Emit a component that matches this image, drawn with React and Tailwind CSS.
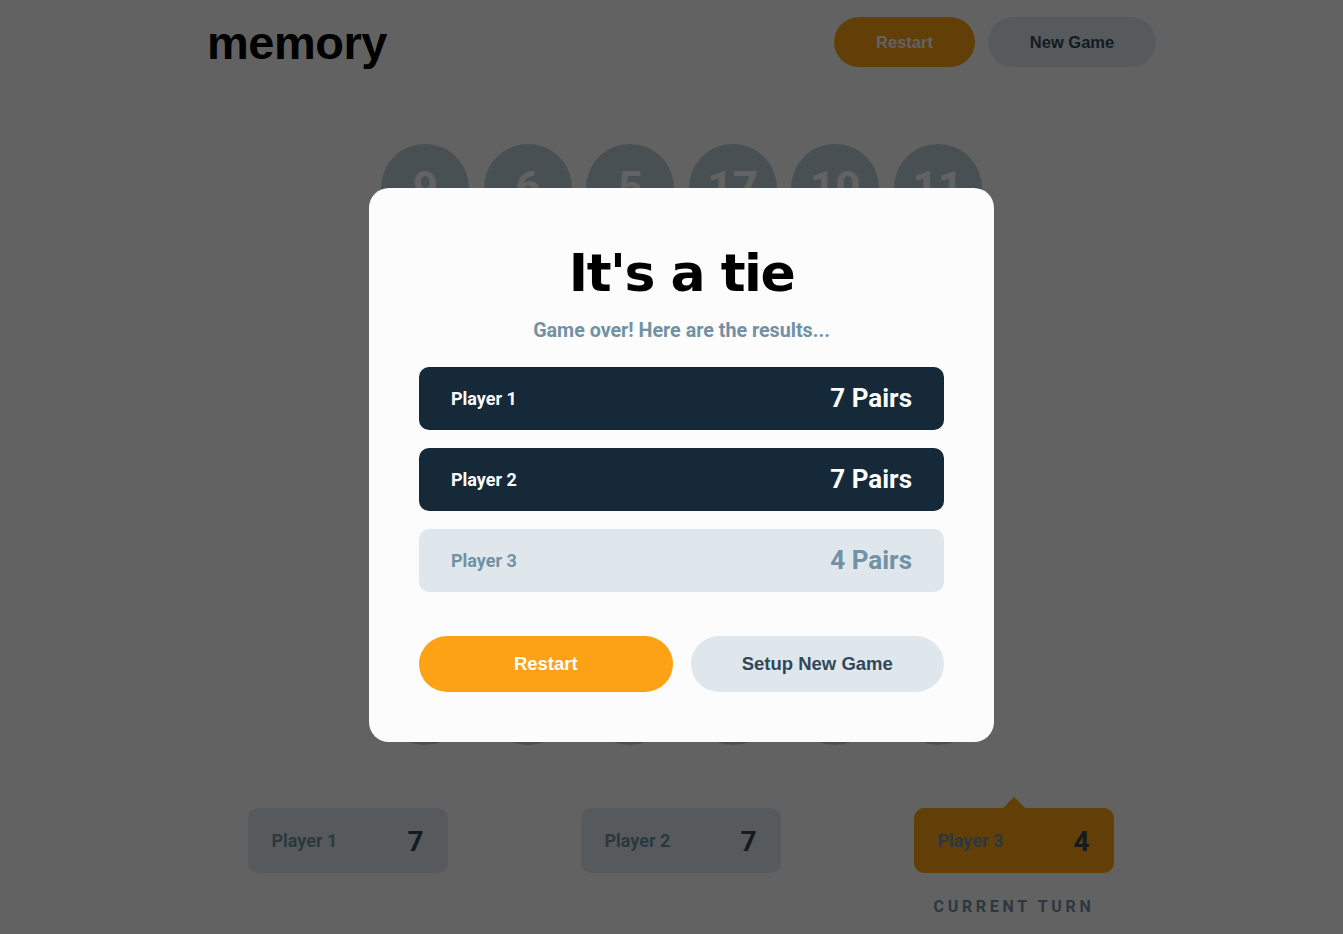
import React from 'react'

const board = [
  9, 6, 5, 17, 10, 11,
  3, 14, 0, 8, 2, 15,
  12, 1, 7, 4, 16, 13,
  5, 10, 9, 17, 6, 11,
  0, 3, 14, 8, 15, 2,
  13, 7, 1, 12, 4, 16,
];

const players = [
  { name: 'Player 1', score: 7 },
  { name: 'Player 2', score: 7 },
  { name: 'Player 3', score: 4, active: true },
];

function Header() {
  return (
    <header className="flex items-center justify-between w-[949px] mx-auto pt-[17px]">
      <h1 className="font-['Liberation_Sans',Arial,sans-serif] font-bold text-[47px] leading-none tracking-[-0.5px] text-black">
        memory
      </h1>
      <div className="flex gap-[13px]">
        <button className="h-[50px] w-[141px] rounded-full bg-[#FDA214] text-[#FCFCFC] font-['Liberation_Sans',Arial,sans-serif] font-bold text-[16.5px]">
          Restart
        </button>
        <button className="h-[50px] w-[168px] rounded-full bg-[#DFE7EC] text-[#304859] font-['Liberation_Sans',Arial,sans-serif] font-bold text-[16.5px]">
          New Game
        </button>
      </div>
    </header>
  );
}

function Board() {
  return (
    <div className="grid grid-cols-6 gap-[14.5px] w-[600.5px] mx-auto mt-[77px]">
      {board.map((n, i) => (
        <div key={i} className="w-[88px] h-[88px] rounded-full bg-[#BCCED9] flex items-center justify-center text-[#FCFCFC] font-['Roboto',sans-serif] font-bold text-[44px]">
          {n}
        </div>
      ))}
    </div>
  );
}

function Players() {
  return (
    <div className="flex justify-center gap-[133px] mt-[63px] -ml-[2px]">
      {players.map((p) => (
        <div key={p.name} className="flex flex-col items-center">
          <div className={`relative w-[200px] h-[65px] rounded-[10px] flex items-center justify-between px-6 ${p.active ? 'bg-[#FDA214]' : 'bg-[#DFE7EC]'}`}>
            {p.active && (
              <div className="absolute -top-[11px] left-1/2 -translate-x-1/2 w-0 h-0 border-l-[11px] border-r-[11px] border-b-[11px] border-l-transparent border-r-transparent border-b-[#FDA214]" />
            )}
            <span className="font-['Roboto',sans-serif] font-bold text-[18px] text-[#7191A5]">{p.name}</span>
            <span className="font-['Roboto',sans-serif] font-bold text-[28px] pt-[3px] text-[#304859]">{p.score}</span>
          </div>
          {p.active && (
            <p className="mt-[22px] font-['Roboto',sans-serif] font-bold text-[16px] leading-6 tracking-[3.7px] text-[#7191A5] pl-[1px]">
              CURRENT TURN
            </p>
          )}
        </div>
      ))}
    </div>
  );
}

function ResultRow({ name, pairs, winner }) {
  return (
    <div className={`h-[63px] rounded-[10px] flex items-center justify-between px-8 ${winner ? 'bg-[#152938] text-[#FCFCFC]' : 'bg-[#DFE7EC] text-[#7191A5]'}`}>
      <span className="font-['Roboto',sans-serif] font-bold text-[18px]">{name}</span>
      <span className="font-['Roboto',sans-serif] font-bold text-[26px]">{pairs} Pairs</span>
    </div>
  );
}

function ResultModal() {
  return (
    <div className="fixed inset-0 bg-black/[0.61] flex items-center justify-center pl-5 pb-[4px]">
      <div className="w-[625px] bg-[#FCFCFC] rounded-[20px] px-[50px] pt-[59px] pb-[50px]">
        <h2 className="text-center font-['DejaVu_Sans',sans-serif] font-bold text-[52px] leading-none tracking-[-1.5px] text-black">
          It's a tie
        </h2>
        <p className="mt-[20px] text-center font-['Roboto',sans-serif] font-bold text-[19.7px] leading-6 text-[#7191A5]">
          Game over! Here are the results...
        </p>
        <div className="mt-[24px] flex flex-col gap-[18px]">
          <ResultRow name="Player 1" pairs={7} winner />
          <ResultRow name="Player 2" pairs={7} winner />
          <ResultRow name="Player 3" pairs={4} />
        </div>
        <div className="mt-[44px] grid grid-cols-2 gap-[18px]">
          <button className="h-[56px] rounded-full bg-[#FDA214] text-[#FCFCFC] font-['Liberation_Sans',Arial,sans-serif] font-bold text-[18.5px]">
            Restart
          </button>
          <button className="h-[56px] rounded-full bg-[#DFE7EC] text-[#304859] font-['Liberation_Sans',Arial,sans-serif] font-bold text-[18.5px]">
            Setup New Game
          </button>
        </div>
      </div>
    </div>
  );
}

export default function App() {
  return (
    <div className="min-h-screen bg-[#FCFCFC] pl-5 pb-4">
      <Header />
      <Board />
      <Players />
      <ResultModal />
    </div>
  );
}
